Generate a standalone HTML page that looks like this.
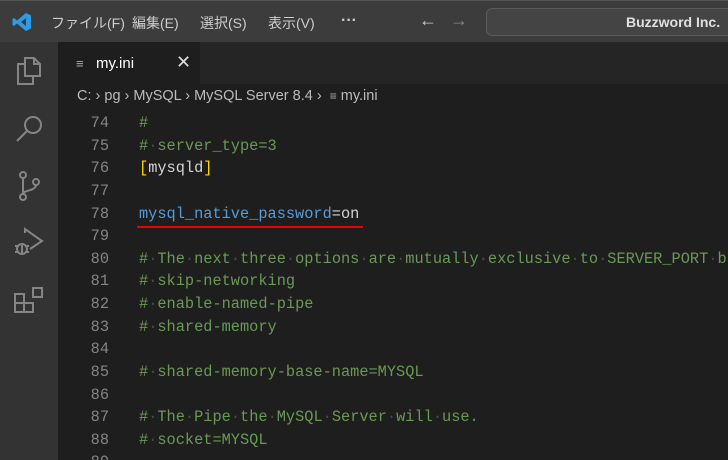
<!DOCTYPE html>
<html><head><meta charset="utf-8"><style>
*{margin:0;padding:0;box-sizing:border-box}
html,body{width:728px;height:460px;overflow:hidden}
body{background:#1e1e1e;font-family:"Liberation Sans","Noto Sans CJK JP",sans-serif;position:relative}
.title{position:absolute;left:0;top:0;width:728px;height:42px;background:#3c3c3c;border-top:1px solid #555}
.menu{position:absolute;top:12px;color:#ccc;font-size:14px}
.search{position:absolute;left:486px;top:7px;width:260px;height:28px;border:1px solid #5a5a5a;border-radius:6px;background:#444}
.search span{position:absolute;left:139px;top:5px;color:#e0e0e0;font-size:14px;font-weight:bold}
.act{position:absolute;left:0;top:42px;width:58px;height:418px;background:#333}
.tabs{position:absolute;left:58px;top:42px;width:670px;height:42px;background:#252526}
.tab{position:absolute;left:58px;top:42px;width:142px;height:42px;background:#1e1e1e}
.crumb{position:absolute;left:77px;top:88px;color:#bbb;font-size:14.5px;white-space:pre}
.code{position:absolute;left:58px;top:112px;font-family:"Liberation Mono",monospace;font-size:15.3px}
.l{height:22.64px;line-height:22.64px;white-space:pre;position:relative}
.n{position:absolute;left:0;width:51px;text-align:right;color:#858585}
.t{position:absolute;left:81px;color:#6a9955}
.d{color:#4a4a4a}
</style></head><body>
<div class="title">
<svg style="position:absolute;left:12px;top:11px" width="20" height="20" viewBox="0 0 20 20"><path d="M14 1 L19 3.5 V16.5 L14 19 L5 11.5 L2 14 L0.5 13 V7 L2 6 L5 8.5 Z M14 6 L9 10 L14 14 Z" fill="#2d9be6" fill-rule="evenodd"/></svg>
<span class="menu" style="left:51px">ファイル(F)</span>
<span class="menu" style="left:132px">編集(E)</span>
<span class="menu" style="left:200px">選択(S)</span>
<span class="menu" style="left:268px">表示(V)</span>
<span class="menu" style="left:341px;top:11px;font-size:16px;font-weight:bold">···</span>
<span class="menu" style="left:419px;top:9px;font-size:18px;color:#ccc">←</span>
<span class="menu" style="left:450px;top:9px;font-size:18px;color:#888">→</span>
<div class="search"><span>Buzzword Inc.</span></div>
</div>
<div class="act">
<svg style="position:absolute;left:15px;top:14px" width="28" height="30" viewBox="0 0 28 30" fill="none" stroke="#858585" stroke-width="2"><path d="M10 2h9l6 6v12H10z M19 2v6h6 M10 8H3v20h15v-8"/></svg>
<svg style="position:absolute;left:15px;top:72px" width="30" height="30" viewBox="0 0 30 30" fill="none" stroke="#858585" stroke-width="2"><circle cx="18" cy="11" r="8"/><path d="M12 17L2 27"/></svg>
<svg style="position:absolute;left:16px;top:128px" width="28" height="32" viewBox="0 0 28 32" fill="none" stroke="#858585" stroke-width="2"><circle cx="7" cy="5" r="3"/><circle cx="7" cy="27" r="3"/><circle cx="20" cy="12" r="3"/><path d="M7 8v16 M20 15c0 6-13 5-13 9"/></svg>
<svg style="position:absolute;left:13px;top:185px" width="32" height="32" viewBox="0 0 32 32" fill="none" stroke="#858585" stroke-width="2"><path d="M12 6V2l17 12-12 8"/><circle cx="9" cy="22" r="5"/><path d="M2 19h4 M12 19h4 M2 25h4 M12 25h4 M9 17v10"/></svg>
<svg style="position:absolute;left:13px;top:244px" width="32" height="32" viewBox="0 0 32 32" fill="none" stroke="#858585" stroke-width="2"><path d="M2 8h9v9H2z M11 17h9v9h-9z M2 17h9v9H2z M20 2h9v9h-9z"/></svg>
</div>
<div class="tabs"></div>
<div class="tab">
<span style="position:absolute;left:18px;top:14px;color:#aaa;font-size:13px">≡</span>
<span style="position:absolute;left:38px;top:13px;color:#fff;font-size:15px">my.ini</span>
<span style="position:absolute;left:118px;top:10px;color:#ddd;font-size:18px">✕</span>
</div>
<div class="crumb">C: › pg › MySQL › MySQL Server 8.4 ›  <span style="color:#aaa;font-size:12px">≡</span> my.ini</div>
<div class="code">
<div class="l"><span class="n">74</span><span class="t">#</span></div>
<div class="l"><span class="n">75</span><span class="t">#<span class="d">·</span>server_type=3</span></div>
<div class="l"><span class="n">76</span><span class="t" style="color:#d4d4d4"><span style="color:#ffd700">[</span>mysqld<span style="color:#ffd700">]</span></span></div>
<div class="l"><span class="n">77</span></div>
<div class="l"><span class="n">78</span><span class="t" style="color:#569cd6">mysql_native_password<span style="color:#d4d4d4">=on</span></span></div>
<div class="l"><span class="n">79</span></div>
<div class="l"><span class="n">80</span><span class="t">#<span class="d">·</span>The<span class="d">·</span>next<span class="d">·</span>three<span class="d">·</span>options<span class="d">·</span>are<span class="d">·</span>mutually<span class="d">·</span>exclusive<span class="d">·</span>to<span class="d">·</span>SERVER_PORT<span class="d">·</span>b</span></div>
<div class="l"><span class="n">81</span><span class="t">#<span class="d">·</span>skip-networking</span></div>
<div class="l"><span class="n">82</span><span class="t">#<span class="d">·</span>enable-named-pipe</span></div>
<div class="l"><span class="n">83</span><span class="t">#<span class="d">·</span>shared-memory</span></div>
<div class="l"><span class="n">84</span></div>
<div class="l"><span class="n">85</span><span class="t">#<span class="d">·</span>shared-memory-base-name=MYSQL</span></div>
<div class="l"><span class="n">86</span></div>
<div class="l"><span class="n">87</span><span class="t">#<span class="d">·</span>The<span class="d">·</span>Pipe<span class="d">·</span>the<span class="d">·</span>MySQL<span class="d">·</span>Server<span class="d">·</span>will<span class="d">·</span>use.</span></div>
<div class="l"><span class="n">88</span><span class="t">#<span class="d">·</span>socket=MYSQL</span></div>
<div class="l"><span class="n">89</span></div>
</div>
<div style="position:absolute;left:137px;top:226px;width:226px;height:2px;background:#e00"></div>
</body></html>
